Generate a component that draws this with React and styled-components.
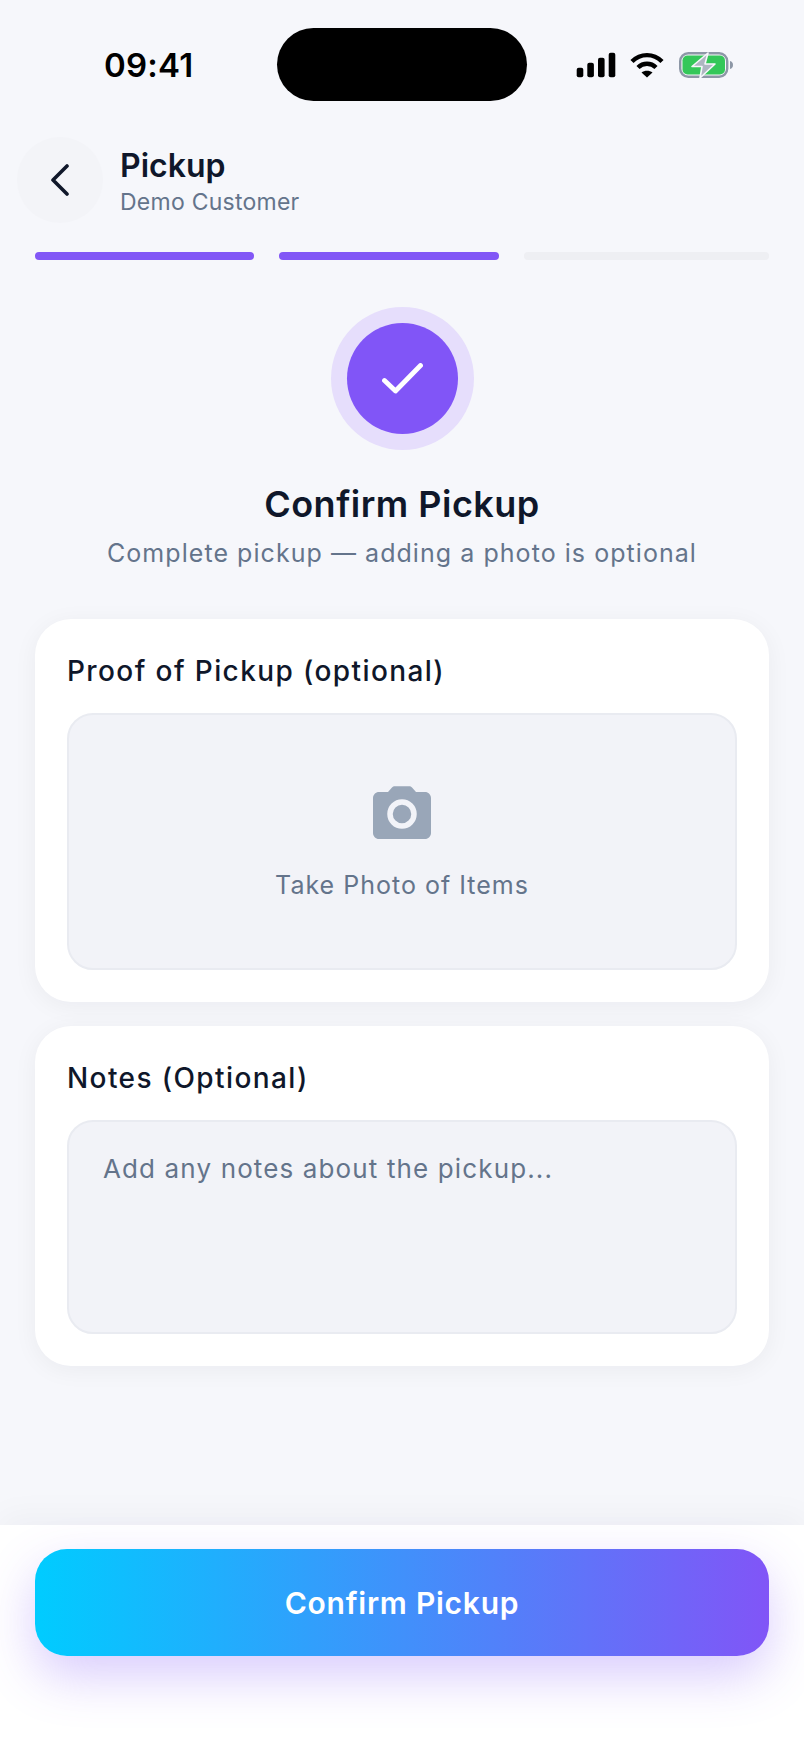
import React from "react";
import styled, { createGlobalStyle } from "styled-components";

const GlobalStyle = createGlobalStyle`
  html, body {
    margin: 0;
    padding: 0;
    background: #f6f7fb;
  }
  * {
    box-sizing: border-box;
  }
`;

const Screen = styled.div`
  width: 804px;
  height: 1748px;
  display: flex;
  flex-direction: column;
  overflow: hidden;
  background: #f6f7fb;
  font-family: Inter, "Noto Sans", sans-serif;
  color: #0f172a;
`;

const StatusBar = styled.div`
  height: 137px;
  padding: 28px 0 0 104px;
  display: flex;
  align-items: flex-start;
  flex-shrink: 0;
`;

const Time = styled.div`
  width: 173px;
  height: 73px;
  line-height: 75px;
  font-size: 33px;
  font-weight: 600;
  letter-spacing: 0.2px;
  color: #000;
`;

const Island = styled.div`
  width: 250px;
  height: 73px;
  border-radius: 37px;
  background: #000;
`;

const StatusIcons = styled.div`
  height: 73px;
  margin-left: 49px;
  display: flex;
  align-items: center;
  gap: 14px;
`;

const Header = styled.div`
  height: 86px;
  padding-left: 17px;
  display: flex;
  align-items: center;
  gap: 17px;
  flex-shrink: 0;
`;

const BackButton = styled.div`
  width: 86px;
  height: 86px;
  border-radius: 50%;
  background: #f3f4f8;
  display: flex;
  align-items: center;
  justify-content: center;
`;

const HeaderText = styled.div`
  padding-top: 2px;
  display: flex;
  flex-direction: column;
`;

const HeaderTitle = styled.div`
  font-size: 32px;
  line-height: 42px;
  font-weight: 600;
`;

const HeaderSub = styled.div`
  font-size: 23px;
  line-height: 30px;
  letter-spacing: 0.25px;
  color: #64748b;
`;

const Progress = styled.div`
  margin-top: 29px;
  padding: 0 35px;
  display: grid;
  grid-template-columns: 219px 220px 245px;
  gap: 25px;
  flex-shrink: 0;
`;

const ProgressStep = styled.div`
  height: 8px;
  border-radius: 4px;
  background: ${(p) => (p.$done ? "#8257f6" : "#eeeff3")};
`;

const Hero = styled.div`
  margin-top: 47px;
  display: flex;
  flex-direction: column;
  align-items: center;
  flex-shrink: 0;
`;

const CheckHalo = styled.div`
  width: 143px;
  height: 143px;
  border-radius: 50%;
  background: #e6defc;
  display: flex;
  align-items: center;
  justify-content: center;
`;

const CheckDisc = styled.div`
  width: 111px;
  height: 111px;
  border-radius: 50%;
  background: #8155f7;
  display: flex;
  align-items: center;
  justify-content: center;
`;

const HeroTitle = styled.h1`
  margin: 31px 0 0;
  font-size: 36px;
  line-height: 46px;
  font-weight: 600;
  letter-spacing: 0.48px;
`;

const HeroSub = styled.p`
  margin: 9px 0 0;
  font-size: 25px;
  line-height: 34px;
  letter-spacing: 1.05px;
  color: #64748b;
`;

const Cards = styled.div`
  margin-top: 49px;
  padding: 0 35px;
  display: flex;
  flex-direction: column;
  gap: 24px;
  flex-shrink: 0;
`;

const Card = styled.section`
  padding: 34px 32px 32px;
  border-radius: 36px;
  background: #fff;
  box-shadow: 0 4px 24px rgba(15, 23, 42, 0.05);
`;

const CardLabel = styled.div`
  margin-bottom: 24px;
  font-size: 28px;
  line-height: 36px;
  font-weight: 500;
  letter-spacing: 1.4px;
`;

const PhotoArea = styled.div`
  height: 257px;
  padding-top: 3px;
  border: 2px solid #e9ebf1;
  border-radius: 26px;
  background: #f2f3f8;
  display: flex;
  flex-direction: column;
  align-items: center;
  justify-content: center;
  gap: 30px;
`;

const PhotoLabel = styled.div`
  font-size: 25px;
  line-height: 32px;
  letter-spacing: 1px;
  color: #64748b;
`;

const NotesArea = styled.div`
  height: 214px;
  padding: 30px 34px;
  border: 2px solid #e9ebf1;
  border-radius: 26px;
  background: #f2f3f8;
  font-size: 26px;
  line-height: 34px;
  letter-spacing: 1.13px;
  color: #64748b;
`;

const Footer = styled.div`
  margin-top: auto;
  height: 223px;
  padding: 24px 35px 0;
  background: #fff;
  box-shadow: 0 -8px 32px rgba(15, 23, 42, 0.04);
  flex-shrink: 0;
`;

const ConfirmButton = styled.button`
  width: 100%;
  height: 107px;
  border: 0;
  border-radius: 32px;
  background: linear-gradient(90deg, #00ccff 0%, #8155f7 100%);
  box-shadow: 0 20px 50px rgba(129, 85, 247, 0.3);
  font-family: inherit;
  font-size: 30px;
  font-weight: 600;
  letter-spacing: 0.75px;
  color: #fff;
`;

const SignalIcon = () => (
  <svg width="40" height="26" viewBox="0 0 40 26" fill="#000">
    <rect x="0.7" y="15.7" width="6.6" height="9.6" rx="2" />
    <rect x="11.3" y="10.7" width="6.6" height="14.6" rx="2" />
    <rect x="22" y="5.7" width="6.6" height="19.6" rx="2" />
    <rect x="32.7" y="0.7" width="6.6" height="24.6" rx="2" />
  </svg>
);

const WifiIcon = () => (
  <svg width="34" height="26" viewBox="0 0 34 26" fill="none" stroke="#000" strokeWidth="4.4">
    <path d="M2 9.5C10.5 1 23.5 1 32 9.5" />
    <path d="M8 15.5C13 10.5 21 10.5 26 15.5" />
    <path d="M17 25.5L11.5 20.5C14.5 18 19.5 18 22.5 20.5Z" fill="#000" stroke="none" />
  </svg>
);

const BatteryIcon = () => (
  <svg width="56" height="28" viewBox="0 0 56 28" fill="none">
    <rect x="2.2" y="2.2" width="47" height="23.6" rx="8" stroke="#8d97a6" strokeWidth="2.4" />
    <rect x="4.5" y="4.5" width="42.5" height="19" rx="5" fill="#34c759" />
    <path d="M52 10C54 10.5 55 12 55 14C55 16 54 17.5 52 18Z" fill="#8d97a6" />
    <path
      d="M30 2L14 15.5H24L22 27L37 13H27Z"
      fill="#aeb6c2"
      stroke="#f6f7fb"
      strokeWidth="1.6"
      strokeLinejoin="round"
    />
  </svg>
);

const BackIcon = () => (
  <svg width="20" height="32" viewBox="0 0 20 32" fill="none" stroke="#0f172a" strokeWidth="3.6" strokeLinecap="round" strokeLinejoin="round">
    <path d="M17 2L3 16L17 30" />
  </svg>
);

const CheckIcon = () => (
  <svg width="41" height="31" viewBox="0 0 41 31" fill="none" stroke="#fff" strokeWidth="4.8" strokeLinecap="round" strokeLinejoin="round">
    <path d="M2.5 17.5L13.5 28L38.5 2.5" />
  </svg>
);

const CameraIcon = () => (
  <svg width="58" height="53" viewBox="0 0 58 53">
    <path
      d="M6 6H15L19 1.5C19.7 0.7 20.7 0.2 22 0.2H36C37.3 0.2 38.3 0.7 39 1.5L43 6H52C55.3 6 58 8.7 58 12V47C58 50.3 55.3 53 52 53H6C2.7 53 0 50.3 0 47V12C0 8.7 2.7 6 6 6Z"
      fill="#99a6b8"
    />
    <circle cx="29" cy="28" r="12" fill="none" stroke="#f2f3f8" strokeWidth="5.5" />
  </svg>
);

const App = () => {
  return (
    <Screen>
      <GlobalStyle />
      <StatusBar>
        <Time>09:41</Time>
        <Island />
        <StatusIcons>
          <SignalIcon />
          <WifiIcon />
          <BatteryIcon />
        </StatusIcons>
      </StatusBar>

      <Header>
        <BackButton>
          <BackIcon />
        </BackButton>
        <HeaderText>
          <HeaderTitle>Pickup</HeaderTitle>
          <HeaderSub>Demo Customer</HeaderSub>
        </HeaderText>
      </Header>

      <Progress>
        <ProgressStep $done />
        <ProgressStep $done />
        <ProgressStep />
      </Progress>

      <Hero>
        <CheckHalo>
          <CheckDisc>
            <CheckIcon />
          </CheckDisc>
        </CheckHalo>
        <HeroTitle>Confirm Pickup</HeroTitle>
        <HeroSub>Complete pickup — adding a photo is optional</HeroSub>
      </Hero>

      <Cards>
        <Card>
          <CardLabel>Proof of Pickup (optional)</CardLabel>
          <PhotoArea>
            <CameraIcon />
            <PhotoLabel>Take Photo of Items</PhotoLabel>
          </PhotoArea>
        </Card>
        <Card>
          <CardLabel>Notes (Optional)</CardLabel>
          <NotesArea>Add any notes about the pickup...</NotesArea>
        </Card>
      </Cards>

      <Footer>
        <ConfirmButton>Confirm Pickup</ConfirmButton>
      </Footer>
    </Screen>
  );
};

export default App;
